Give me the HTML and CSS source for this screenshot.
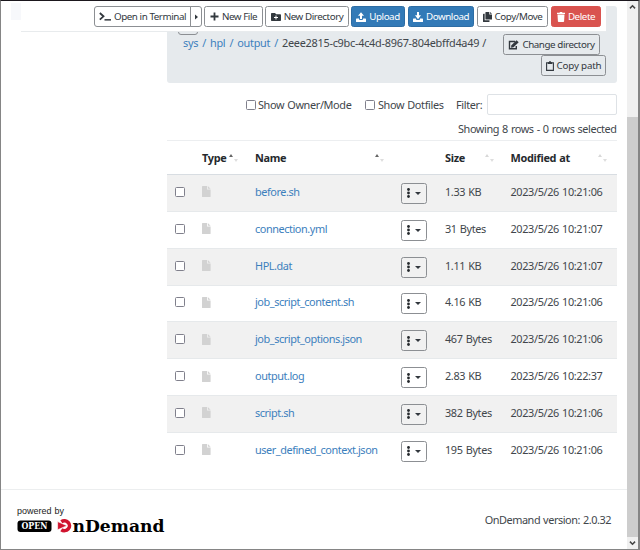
FILE: index.html
```html
<!DOCTYPE html>
<html lang="en">
<head>
<meta charset="utf-8">
<title>Files - Open OnDemand</title>
<link rel="stylesheet" href="styles.css">
</head>
<body>
<svg class="defs" aria-hidden="true">
  <symbol id="file" viewBox="0 0 9 11"><path d="M.6 0H5v3.4h3.6V10.4a.6.6 0 0 1-.6.6H.6a.6.6 0 0 1-.6-.6V.6A.6.6 0 0 1 .6 0zM5.8 0 8.6 2.7H5.8z"/></symbol>
  <symbol id="dots" viewBox="0 0 3 10"><circle cx="1.5" cy="1.5" r="1.4"/><circle cx="1.5" cy="5" r="1.4"/><circle cx="1.5" cy="8.500" r="1.4"/></symbol>
  <symbol id="tray" viewBox="0 0 10 10"><path d="M.6 6.500H3v.3C3 7.600 3.500 8 4.200 8h1.600C6.500 8 7 7.600 7 6.800v-.3h2.400c.4 0 .6.200.6.500v2.400c0 .4-.2.600-.6.600H.6C.2 10 0 9.800 0 9.400V7c0-.3.200-.5.600-.5z"/></symbol>
</svg>
<div class="window">
  <main class="page">
    <div class="tab-edge"></div>
    <div class="toolbar">
      <div class="split">
        <button class="btn terminal"><svg class="i-term" viewBox="0 0 12 9"><path d="M.8 1 4.500 4.300.8 7.600" fill="none" stroke="currentColor" stroke-width="1.800"/><path d="M5.500 7.100H12v1.500H5.500z"/></svg><span>Open in Terminal</span></button>
        <button class="btn toggle"><svg class="i-right" viewBox="0 0 3 6"><path d="M0 .5 3 3 0 5.500z"/></svg></button>
      </div>
      <button class="btn newfile"><svg class="i-plus" viewBox="0 0 9 9"><path d="M3.600.5h1.800v3.100h3.100v1.800H5.400v3.100H3.600V5.400H.5V3.600h3.100z"/></svg><span>New File</span></button>
      <button class="btn newdir"><svg class="i-folder" viewBox="0 0 10 8"><path fill-rule="evenodd" d="M1 0h3l1.200 1.200H9c.6 0 1 .4 1 1V7c0 .6-.4 1-1 1H1C.4 8 0 7.600 0 7V1c0-.6.400-1 1-1zm3.500 2.600v1.500H3v1h1.500v1.500h1V5.100H7v-1H5.500V2.600z"/></svg><span>New Directory</span></button>
      <button class="btn blue upload"><svg class="i-ten" viewBox="0 0 10 10"><use href="#tray" width="10" height="10"/><path d="M4 7V3.800H2L5 .2l3 3.600H6V7z"/></svg><span>Upload</span></button>
      <button class="btn blue download"><svg class="i-ten" viewBox="0 0 10 10"><use href="#tray" width="10" height="10"/><path d="M4 0h2v3.300h2L5 7.200 2 3.300h2z"/></svg><span>Download</span></button>
      <button class="btn copymove"><svg class="i-copy" viewBox="0 0 9 10"><path d="M3 0h3.300v2.400H9V7.500H3a.6.6 0 0 1-.6-.6V.6A.6.6 0 0 1 3 0zM7 0l2 1.800H7zM.6 1.800h1.100v6.500H6.500v1.100a.6.6 0 0 1-.6.600H.6A.6.6 0 0 1 0 9.400V2.400a.6.6 0 0 1 .6-.6z"/></svg><span>Copy/Move</span></button>
      <button class="btn red delete"><svg class="i-trash" viewBox="0 0 8 10"><path d="M0 .7h2.500L3 0h2l.5.7H8v1.200H0zM.5 2.600h7L7.100 9.300c0 .4-.3.700-.8.700H1.700c-.5 0-.8-.3-.8-.7z"/></svg><span>Delete</span></button>
    </div>
    <section class="content">
      <div class="pathbar">
        <button class="up"></button>
        <nav class="crumbs"><a>sys</a><a>/</a><a>hpl</a><a>/</a><a>output</a><a>/</a><span class="current">2eee2815-c9bc-4c4d-8967-804ebffd4a49 /</span></nav>
        <div class="path-actions">
          <button class="btn chdir"><svg class="i-edit" viewBox="0 0 11 10"><path d="M7 1.500H1.500v7.300h6.800V6" fill="none" stroke="currentColor" stroke-width="1.400"/><path d="M8.500.2 10.700 2.200 5.500 7.200 3 7.700l.4-2.500z"/></svg><span>Change directory</span></button>
          <button class="btn copypath"><svg class="i-clip" viewBox="0 0 8 10"><path d="M.6 1.900h6.800v7.500H.6z" fill="none" stroke="currentColor" stroke-width="1.100"/><path d="M2 1.200h1L3.500 0h1L5 1.200h1V3H2z"/></svg><span>Copy path</span></button>
        </div>
      </div>
      <div class="filters">
        <label class="owner"><i class="box"></i><span>Show Owner/Mode</span></label>
        <label class="dotfiles"><i class="box"></i><span>Show Dotfiles</span></label>
        <label class="filter"><span>Filter:</span><input type="text"></label>
      </div>
      <div class="info"><span>Showing 8 rows - 0 rows selected</span></div>
      <div class="files">
        <div class="row head"><span></span><span class="sort">Type<i class="arrows on"></i></span><span class="sort wide">Name<i class="arrows on"></i></span><span></span><span class="sort wide">Size<i class="arrows"></i></span><span class="sort wide last">Modified at<i class="arrows"></i></span></div>
        <div class="row"><i class="box"></i><svg class="i-file"><use href="#file"/></svg><a>before.sh</a><button class="menu"><svg class="i-dots"><use href="#dots"/></svg><i class="caret"></i></button><span>1.33 KB</span><span>2023/5/26 10:21:06</span></div>
        <div class="row"><i class="box"></i><svg class="i-file"><use href="#file"/></svg><a>connection.yml</a><button class="menu"><svg class="i-dots"><use href="#dots"/></svg><i class="caret"></i></button><span>31 Bytes</span><span>2023/5/26 10:21:07</span></div>
        <div class="row"><i class="box"></i><svg class="i-file"><use href="#file"/></svg><a>HPL.dat</a><button class="menu"><svg class="i-dots"><use href="#dots"/></svg><i class="caret"></i></button><span>1.11 KB</span><span>2023/5/26 10:21:07</span></div>
        <div class="row"><i class="box"></i><svg class="i-file"><use href="#file"/></svg><a>job_script_content.sh</a><button class="menu"><svg class="i-dots"><use href="#dots"/></svg><i class="caret"></i></button><span>4.16 KB</span><span>2023/5/26 10:21:06</span></div>
        <div class="row"><i class="box"></i><svg class="i-file"><use href="#file"/></svg><a>job_script_options.json</a><button class="menu"><svg class="i-dots"><use href="#dots"/></svg><i class="caret"></i></button><span>467 Bytes</span><span>2023/5/26 10:21:06</span></div>
        <div class="row"><i class="box"></i><svg class="i-file"><use href="#file"/></svg><a>output.log</a><button class="menu"><svg class="i-dots"><use href="#dots"/></svg><i class="caret"></i></button><span>2.83 KB</span><span>2023/5/26 10:22:37</span></div>
        <div class="row"><i class="box"></i><svg class="i-file"><use href="#file"/></svg><a>script.sh</a><button class="menu"><svg class="i-dots"><use href="#dots"/></svg><i class="caret"></i></button><span>382 Bytes</span><span>2023/5/26 10:21:06</span></div>
        <div class="row"><i class="box"></i><svg class="i-file"><use href="#file"/></svg><a>user_defined_context.json</a><button class="menu"><svg class="i-dots"><use href="#dots"/></svg><i class="caret"></i></button><span>195 Bytes</span><span>2023/5/26 10:21:06</span></div>
      </div>
    </section>
    <footer class="footer">
      <svg class="logo" viewBox="0 0 150 32">
        <text x="0" y="8.500" class="powered" textLength="47" lengthAdjust="spacingAndGlyphs">powered by</text>
        <rect x=".5" y="15.500" width="34" height="11.500" rx="3" fill="#000"/>
        <text x="4.500" y="24.200" class="open" textLength="26" lengthAdjust="spacingAndGlyphs">OPEN</text>
        <path d="M44.300 16.700A5.200 4.900 0 1 1 44.300 24.700" fill="none" stroke="#d0142f" stroke-width="3.600"/>
        <path d="M40.600 16.600 50 20.700 40.600 24.800z" fill="#d0142f" stroke="#fff" stroke-width=".6"/>
        <text x="55.500" y="27.300" class="brand" textLength="92" lengthAdjust="spacingAndGlyphs">nDemand</text>
      </svg>
      <span class="version">OnDemand version: 2.0.32</span>
    </footer>
  </main>
  <aside class="scrollbar">
    <svg viewBox="0 0 12 12"><path d="M3.200 7.500 6 4.700l2.800 2.800"/></svg>
    <div class="thumb"></div>
    <svg viewBox="0 0 12 12"><path d="M3.200 4.500 6 7.300l2.800-2.800"/></svg>
  </aside>
</div>
</body>
</html>
```

FILE: styles.css
```css
* { box-sizing: border-box; }
body {
  margin: 0;
  background: #fff;
  color: #41464b;
  font: 10.9px/16px "Noto Sans", "Open Sans", sans-serif;
  letter-spacing: -0.36px;
  word-spacing: 0.6px;
}
button, input { font: inherit; letter-spacing: inherit; color: inherit; }
svg { display: block; fill: currentColor; flex: none; }
a { color: #3c80bd; }
.defs { position: absolute; width: 0; height: 0; }
.window {
  display: flex;
  width: 640px;
  height: 550px;
  border: 1px solid #858585;
  border-top-color: #1b171d;
  border-right-width: 2px;
  overflow: hidden;
}
.page { position: relative; flex: 1; display: flex; flex-direction: column; }
.tab-edge { position: absolute; left: 10px; top: 2px; width: 10px; height: 17px; background: #f7f8fb; }

.toolbar {
  position: absolute;
  top: 0;
  left: 20px;
  width: 585px;
  height: 31px;
  padding-top: 5px;
  display: flex;
  justify-content: flex-end;
  align-items: flex-start;
  gap: 2px;
  padding-right: 5px;
  background: #fff;
  border-bottom: 1px solid #e8ebed;
  z-index: 1;
}
.btn {
  display: flex;
  align-items: center;
  justify-content: center;
  gap: 3px;
  height: 21px;
  padding: 0;
  border: 1px solid #8c8f93;
  border-radius: 2.500px;
  background: transparent;
  color: #32383e;
  font-size: 9.8px;
  letter-spacing: -0.43px;
  white-space: nowrap;
}
.split { display: flex; }
.terminal { width: 97px; border-radius: 3px 0 0 3px; }
.toggle { width: 12px; margin-left: -1px; border-radius: 0 3px 3px 0; }
.newfile { width: 59px; }
.newdir { width: 84px; }
.upload { width: 54px; margin-right: 1px; }
.download { width: 66px; margin-right: 1px; }
.copymove { width: 71px; margin-right: 1px; }
.delete { width: 50px; }
.blue { background: #337ab7; border-color: #2e6da4; color: #fff; }
.red { background: #d9534f; border-color: #d9534f; color: #fff; }
.i-term { width: 12px; height: 9px; }
.i-right { width: 3px; height: 6px; }
.i-plus { width: 9px; height: 9px; }
.i-folder { width: 10px; height: 8px; }
.i-ten { width: 10px; height: 10px; }
.i-copy { width: 9px; height: 10px; }
.i-trash { width: 8px; height: 10px; }
.i-edit { width: 11px; height: 10px; }
.i-clip { width: 8px; height: 10px; }

.content { margin-left: 166px; width: 450px; height: 488px; }
.pathbar {
  position: relative;
  display: flex;
  justify-content: space-between;
  height: 77px;
  margin-top: 5px;
  padding: 28px 11px 0 16px;
  background: #e6eaed;
  border-radius: 3px;
}
.up {
  position: absolute;
  left: 11px;
  top: 8px;
  width: 20px;
  height: 21px;
  border: 1px solid #8c8f93;
  border-radius: 3px;
  background: transparent;
}
.crumbs { display: flex; padding-top: 1px; gap: 4px; white-space: nowrap; letter-spacing: -0.27px; }
.path-actions { display: flex; flex-direction: column; align-items: flex-end; }
.chdir { width: 97px; margin-right: 6px; }
.copypath { width: 65px; letter-spacing: -0.2px; }
.filters {
  display: flex;
  align-items: center;
  justify-content: flex-end;
  height: 21px;
  margin-top: 11px;
}
.filters label { display: flex; align-items: center; gap: 3px; white-space: nowrap; }
.box {
  width: 10px;
  height: 10px;
  border: 1px solid #80808c;
  border-radius: 1.500px;
  background: #fff;
}
.filters .owner { width: 119px; gap: 2px; }
.filters .dotfiles { width: 91px; gap: 3px; }
.filters .filter { width: 161px; justify-content: space-between; }
.filter input { width: 130px; height: 21px; border: 1px solid #dee2e6; border-radius: 2px; }
.info { display: flex; justify-content: flex-end; height: 25px; padding: 6px 0.500px 0 0; letter-spacing: -0.41px; }

.files { border-top: 1px solid #eceef0; }
.row {
  display: grid;
  grid-template-columns: 27px 53px 146px 44px 65.500px 106.500px;
  align-items: center;
  height: 36.850px;
  padding: 0 0 2px 8px;
  border-top: 1px solid #e6e9eb;
  white-space: nowrap;
}
.row:nth-child(even) { background: #f1f1f1; }
.row a { letter-spacing: -0.44px; }
.head { height: 33px; padding-bottom: 0; border: 0; font-weight: 700; color: #25292d; letter-spacing: -0.3px; }
.head + .row { border-top: 1px solid #d8dde2; }
.i-file { width: 9px; height: 11px; color: #d2d2d2; }
.menu {
  display: flex;
  align-items: center;
  justify-content: center;
  gap: 5px;
  width: 26px;
  height: 21px;
  margin-top: 3px;
  padding: 0;
  border: 1px solid #8c8f93;
  border-radius: 2.500px;
  background: transparent;
  color: #25292d;
}
.i-dots { width: 3px; height: 10px; }
.caret { border: 3px solid transparent; border-top: 3px solid #32383e; border-bottom: 0; }
.sort { display: flex; gap: 3px; align-items: center; }
.wide { justify-content: space-between; padding-right: 17px; }
.last { padding-right: 10px; }
.arrows { display: flex; width: 9px; height: 8px; justify-content: space-between; }
.arrows::before { content: ""; height: 0; border: 2px solid transparent; border-top: 0; border-bottom: 3px solid #d8d8d8; }
.arrows::after { content: ""; align-self: flex-end; border: 2px solid transparent; border-bottom: 0; border-top: 3px solid #dedede; }
.on::before { border-bottom-color: #666; }

.footer {
  display: flex;
  justify-content: space-between;
  height: 60px;
  padding: 15px 16px 0;
  border-top: 1px solid #eceeef;
}
.logo { width: 150px; height: 32px; }
.powered { font: 9.500px "Liberation Sans", sans-serif; letter-spacing: 0; fill: #222; }
.open { font: bold 9px "DejaVu Serif", serif; letter-spacing: 0; fill: #fff; }
.brand { font: bold 17px "DejaVu Serif", serif; letter-spacing: 0; fill: #000; }
.version { padding-top: 7px; letter-spacing: -0.45px; }

.scrollbar { display: flex; flex-direction: column; width: 11px; background: #f0f0f0; }
.scrollbar svg { width: 11px; height: 12px; fill: none; stroke: #444; stroke-width: 1.600; }
.thumb { flex: 1; margin-top: 104px; background: #cdcdcd; }
```
